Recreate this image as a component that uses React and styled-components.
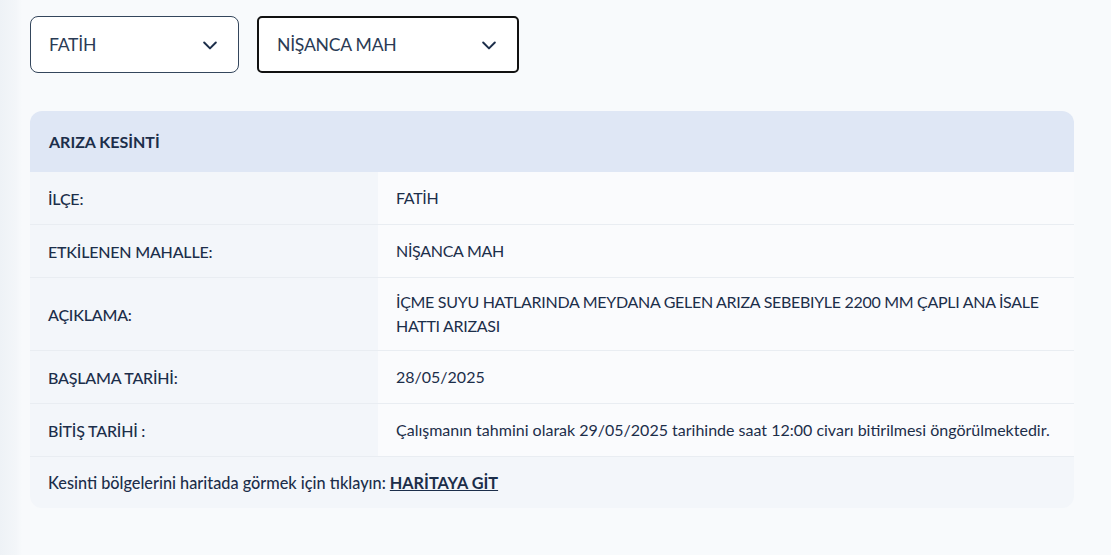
import styled, { createGlobalStyle } from "styled-components";

const GlobalStyle = createGlobalStyle`
  html, body {
    margin: 0;
    padding: 0;
    background: #f8fafc;
  }
  body {
    font-family: Lato, "Noto Sans", sans-serif;
    color: #1c2e4a;
  }
`;

const Page = styled.div`
  min-height: 555px;
  box-sizing: border-box;
  padding: 16px 37px 40px 30px;
  background: linear-gradient(90deg, #eef2f6 0, #f3f6f9 16px, #f8fafc 22px);
`;

const Filters = styled.div`
  display: flex;
  gap: 18px;
  margin-bottom: 38px;
`;

const Select = styled.div`
  box-sizing: border-box;
  display: flex;
  align-items: center;
  justify-content: space-between;
  width: ${(p) => p.$width}px;
  height: 57px;
  padding: 0 18px;
  background: #fff;
  border: ${(p) => (p.$focused ? "2px solid #111" : "1px solid #34465c")};
  border-radius: ${(p) => (p.$focused ? "5px" : "8px")};
  font-size: 17.6px;
  letter-spacing: -0.25px;
  color: #2a3b55;
`;

const Chevron = () => (
  <svg width="20" height="20" viewBox="0 0 24 24" fill="none" stroke="#1c2e4a" strokeWidth="2.4" strokeLinecap="round" strokeLinejoin="round">
    <path d="M5 9l7 7 7-7" />
  </svg>
);

const Card = styled.div`
  border-radius: 12px;
  overflow: hidden;
  background: #fafbfd;
`;

const Header = styled.div`
  height: 61px;
  display: flex;
  align-items: center;
  padding: 0 19px;
  background: #dfe7f5;
  font-size: 16px;
  font-weight: 700;
`;

const Row = styled.div`
  display: grid;
  grid-template-columns: 348px 1fr;
  min-height: 52px;
  border-bottom: 1px solid #e9edf2;
  font-size: 16px;
`;

const Label = styled.div`
  display: flex;
  align-items: center;
  padding: 0 18px;
  background: #f3f6fa;
  font-weight: 500;
  letter-spacing: -0.2px;
`;

const Value = styled.div`
  display: flex;
  align-items: center;
  padding: 12px 18px;
  line-height: 24px;
  letter-spacing: ${(p) => (p.$caps ? "-0.3px" : "0")};
`;

const Footer = styled.div`
  height: 51px;
  display: flex;
  align-items: center;
  padding: 0 18px;
  background: #f3f6fa;
  font-size: 16.3px;
  font-weight: 500;
`;

const MapLink = styled.a`
  margin-left: 4px;
  font-weight: 700;
  color: #1c2e4a;
  text-decoration: underline;
`;

const rows = [
  ["İLÇE:", "FATİH", true],
  ["ETKİLENEN MAHALLE:", "NİŞANCA MAH", true],
  ["AÇIKLAMA:", "İÇME SUYU HATLARINDA MEYDANA GELEN ARIZA SEBEBIYLE 2200 MM ÇAPLI ANA İSALE HATTI ARIZASI", true],
  ["BAŞLAMA TARİHİ:", "28/05/2025", false],
  ["BİTİŞ TARİHİ :", "Çalışmanın tahmini olarak 29/05/2025 tarihinde saat 12:00 civarı bitirilmesi öngörülmektedir.", false],
];

export default function App() {
  return (
    <Page>
      <GlobalStyle />
      <Filters>
        <Select $width={209}>
          FATİH
          <Chevron />
        </Select>
        <Select $width={262} $focused>
          NİŞANCA MAH
          <Chevron />
        </Select>
      </Filters>
      <Card>
        <Header>ARIZA KESİNTİ</Header>
        {rows.map(([label, value, caps]) => (
          <Row key={label}>
            <Label>{label}</Label>
            <Value $caps={caps}>{value}</Value>
          </Row>
        ))}
        <Footer>
          Kesinti bölgelerini haritada görmek için tıklayın:
          <MapLink href="#">HARİTAYA GİT</MapLink>
        </Footer>
      </Card>
    </Page>
  );
}
